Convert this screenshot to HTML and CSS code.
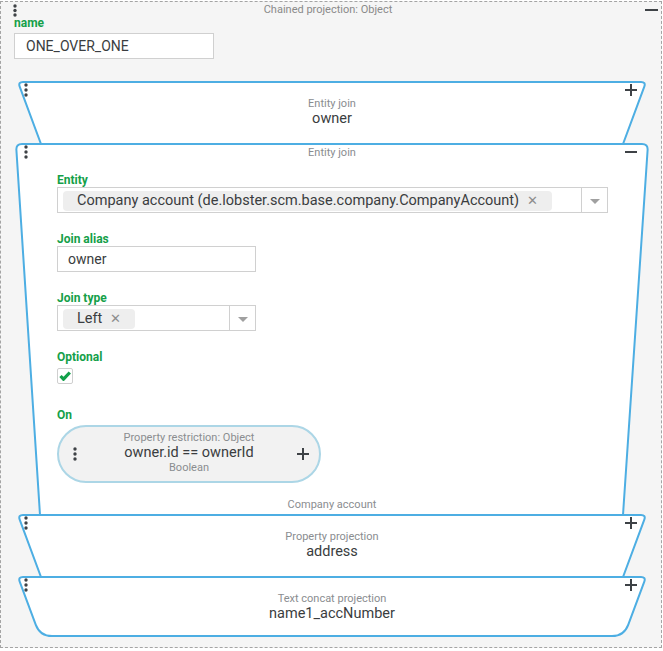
FILE: index.html
```html
<!DOCTYPE html>
<html lang="en">

<head>
    <meta charset="UTF-8">
    <meta name="viewport" content="width=device-width, initial-scale=1.0">
    <title>Chained projection</title>
    <link rel="stylesheet" href="styles.css">
</head>

<body>
    <div class="root">
        <div class="root-head">
            <svg class="dots" width="4" height="14"><circle cx="2" cy="2" r="1.7"/><circle cx="2" cy="6.5" r="1.7"/><circle cx="2" cy="11" r="1.7"/></svg>
            <div class="root-title">Chained projection: Object</div>
            <svg class="minus" width="13" height="4"><path d="M0 2H13"/></svg>
        </div>
        <div class="lbl name-lbl">name</div>
        <div class="input name-input">ONE_OVER_ONE</div>

        <div class="stack">
            <!-- collapsed entity join -->
            <div class="card card-small">
                <svg class="shape" width="636" height="66"><path d="M9 1H627Q632 1 630.3 5.7L609 63H27L5.7 5.7Q4 1 9 1Z"/></svg>
                <svg class="dots card-dots" width="4" height="14"><circle cx="2" cy="2" r="1.7"/><circle cx="2" cy="7" r="1.7"/><circle cx="2" cy="12" r="1.7"/></svg>
                <svg class="plus" width="12" height="12"><path d="M6 0V12M0 6H12"/></svg>
                <div class="kind">Entity join</div>
                <div class="value">owner</div>
            </div>

            <!-- expanded entity join -->
            <div class="card card-open">
                <svg class="shape" width="636" height="375"><path d="M8 1H628Q634 1 633.6 7L609 372H26L2.4 7Q2 1 8 1Z"/></svg>
                <svg class="dots card-dots" width="4" height="14"><circle cx="2" cy="2" r="1.7"/><circle cx="2" cy="7" r="1.7"/><circle cx="2" cy="12" r="1.7"/></svg>
                <svg class="plus" width="12" height="12"><path d="M0 6H12"/></svg>
                <div class="kind">Entity join</div>

                <div class="form">
                    <div class="lbl">Entity</div>
                    <div class="select select-wide">
                        <div class="chips">
                            <span class="chip">Company account (de.lobster.scm.base.company.CompanyAccount)<span class="x">&#x2715;</span></span>
                        </div>
                        <div class="dd"><span class="arrow"></span></div>
                    </div>

                    <div class="lbl">Join alias</div>
                    <div class="input short">owner</div>

                    <div class="lbl">Join type</div>
                    <div class="select short">
                        <div class="chips">
                            <span class="chip">Left<span class="x">&#x2715;</span></span>
                        </div>
                        <div class="dd"><span class="arrow"></span></div>
                    </div>

                    <div class="lbl">Optional</div>
                    <div class="check">
                        <svg width="12" height="10"><path d="M1.5 5L4.5 8.2L10.8 1.5"/></svg>
                    </div>

                    <div class="lbl">On</div>
                    <div class="pill">
                        <svg class="dots pill-dots" width="4" height="14"><circle cx="2" cy="2" r="1.7"/><circle cx="2" cy="7" r="1.7"/><circle cx="2" cy="12" r="1.7"/></svg>
                        <div class="kind">Property restriction: Object</div>
                        <div class="value">owner.id == ownerId</div>
                        <div class="kind">Boolean</div>
                        <svg class="plus pill-plus" width="12" height="12"><path d="M6 0V12M0 6H12"/></svg>
                    </div>
                </div>

                <div class="kind foot">Company account</div>
            </div>

            <div class="card card-small">
                <svg class="shape" width="636" height="66"><path d="M9 1H627Q632 1 630.3 5.7L609 63H27L5.7 5.7Q4 1 9 1Z"/></svg>
                <svg class="dots card-dots" width="4" height="14"><circle cx="2" cy="2" r="1.7"/><circle cx="2" cy="7" r="1.7"/><circle cx="2" cy="12" r="1.7"/></svg>
                <svg class="plus" width="12" height="12"><path d="M6 0V12M0 6H12"/></svg>
                <div class="kind">Property projection</div>
                <div class="value">address</div>
            </div>

            <div class="card card-last">
                <svg class="shape" width="636" height="64"><path d="M9 1H627Q632 1 630.3 5.7L614.2 48.8Q610 60 598 60H38Q26 60 21.8 48.8L5.7 5.7Q4 1 9 1Z"/></svg>
                <svg class="dots card-dots" width="4" height="14"><circle cx="2" cy="2" r="1.7"/><circle cx="2" cy="7" r="1.7"/><circle cx="2" cy="12" r="1.7"/></svg>
                <svg class="plus" width="12" height="12"><path d="M6 0V12M0 6H12"/></svg>
                <div class="kind">Text concat projection</div>
                <div class="value">name1_accNumber</div>
            </div>
        </div>
    </div>
</body>

</html>
```

FILE: styles.css
```css
body {
    margin: 0;
    font-family: Roboto, "Liberation Sans", sans-serif;
    color: #3a3d40;
}

.root {
    box-sizing: border-box;
    width: 662px;
    height: 647px;
    margin-top: 1px;
    border: 1px dashed #a4a4a4;
    background-color: #f5f5f5;
}

.root-head {
    display: grid;
    grid-template-columns: 1fr auto 1fr;
    height: 14px;
}

.root-head .dots {
    margin: 2px 0 0 12px;
}

.root-title {
    font-size: 11px;
    line-height: 15px;
    color: #8a8a8a;
    margin-right: 6px;
}

.root-head .minus {
    justify-self: end;
    margin: 6px 3px 0 0;
}

.dots circle {
    fill: #3e4246;
}

.minus path,
.plus path {
    stroke: #3e4246;
    stroke-width: 2;
}

.lbl {
    font-size: 12px;
    font-weight: bold;
    line-height: 14px;
    color: #14a049;
}

.name-lbl {
    padding-left: 13px;
}

.input {
    box-sizing: border-box;
    height: 26px;
    padding-left: 10px;
    border: 1px solid #d0d0d0;
    background-color: white;
    font-size: 14px;
    line-height: 24px;
    color: #3a3d40;
}

.name-input {
    width: 200px;
    margin: 3px 0 0 13px;
    padding-left: 11px;
}

.stack {
    margin: 22px 0 0 13px;
    width: 636px;
}

.card {
    position: relative;
    z-index: 0;
    text-align: center;
}

.card-small {
    height: 62px;
}

.card-last {
    height: 59px;
}

.card-open {
    height: 371px;
    text-align: left;
}

.shape {
    position: absolute;
    left: 0;
    top: 0;
    z-index: -1;
    overflow: visible;
}

.shape path {
    fill: white;
    stroke: #4daee3;
    stroke-width: 2;
}

.card-dots {
    position: absolute;
    left: 10px;
    top: 2px;
}

.card .plus {
    position: absolute;
    left: 611px;
    top: 3px;
}

.kind {
    font-size: 11px;
    line-height: 13px;
    color: #8a8d90;
}

.value {
    font-size: 14.5px;
    line-height: 17px;
    color: #3a3d40;
}

.card-small .kind,
.card-last .kind {
    padding-top: 16px;
}

.card-open > .kind {
    text-align: center;
    padding-top: 3px;
}

.form {
    padding: 14px 0 0 43px;
}

.form .lbl {
    margin-top: 19px;
}

.form .lbl:first-child {
    margin-top: 0;
}

.select {
    box-sizing: border-box;
    display: flex;
    height: 26px;
    border: 1px solid #d0d0d0;
    background-color: white;
}

.select-wide {
    width: 551px;
}

.short {
    width: 199px;
}

.chips {
    flex: 1;
    padding: 2px 5px;
}

.chip {
    display: inline-flex;
    align-items: center;
    height: 20px;
    padding: 0 14px 0 14px;
    border-radius: 4px;
    background-color: #eeeeee;
    font-size: 14.5px;
    color: #3a3d40;
}

.chip .x {
    margin-left: 8px;
    font-size: 12.5px;
    color: #8d8d8d;
}

.dd {
    width: 25px;
    border-left: 1px solid #d0d0d0;
    display: flex;
    align-items: center;
    justify-content: center;
}

.arrow {
    width: 0;
    height: 0;
    margin-top: 2px;
    border-left: 5px solid transparent;
    border-right: 5px solid transparent;
    border-top: 5px solid #a0a0a0;
}

.check {
    box-sizing: border-box;
    width: 16px;
    height: 16px;
    margin-top: 4px;
    border: 1px solid #cfcfcf;
    border-radius: 2px;
    background-color: white;
    display: flex;
    align-items: center;
    justify-content: center;
}

.check path {
    fill: none;
    stroke: #12a04a;
    stroke-width: 3.2;
}

.form .check + .lbl {
    margin-top: 24px;
}

.pill {
    position: relative;
    box-sizing: border-box;
    width: 264px;
    height: 58px;
    margin-top: 3px;
    padding-top: 4px;
    border: 2px solid #acd6e6;
    border-radius: 29px;
    background-color: #f2f2f2;
    text-align: center;
}

.pill-dots {
    position: absolute;
    left: 14px;
    top: 20px;
}

.pill .pill-plus {
    position: absolute;
    left: 238px;
    top: 21px;
}

.foot {
    margin-top: 12px;
}
```
